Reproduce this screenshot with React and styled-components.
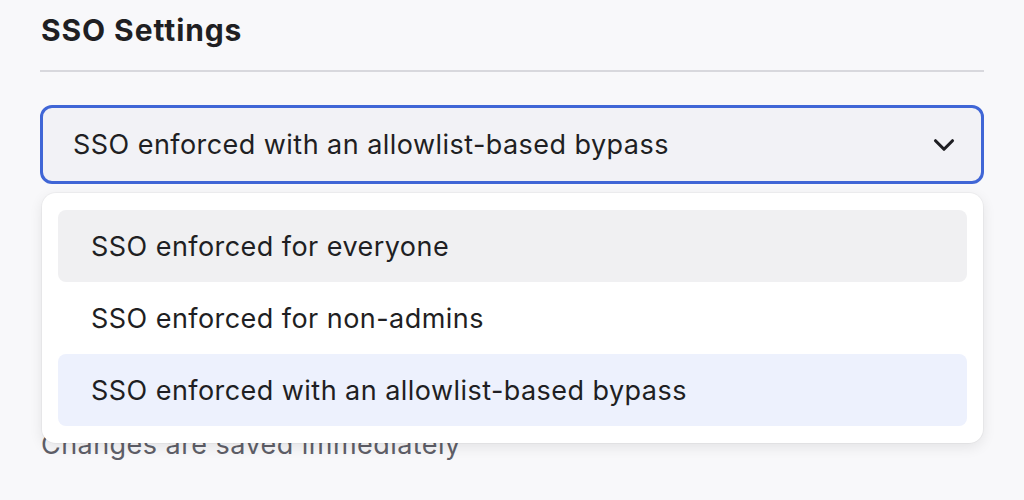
import styled, { createGlobalStyle } from "styled-components";
import { ChevronDown } from "lucide-react";

const GlobalStyle = createGlobalStyle`
  html, body {
    margin: 0;
    padding: 0;
    background: #f8f8fa;
    font-family: Inter, "Noto Sans", sans-serif;
    color: #1f1f23;
  }
`;

const options = [
  "SSO enforced for everyone",
  "SSO enforced for non-admins",
  "SSO enforced with an allowlist-based bypass",
];

const Page = styled.div`
  padding: 11px 40px 0 40px;
  width: 944px;
`;

const Title = styled.h2`
  margin: 0;
  font-size: 30px;
  font-weight: 700;
  line-height: 38px;
  padding-left: 1px;
  letter-spacing: 0.9px;
`;

const Divider = styled.div`
  height: 2px;
  background: #d8d8dd;
  margin: 21px 0 33px 0;
`;

const Field = styled.div`
  position: relative;
`;

const Trigger = styled.div`
  height: 79px;
  box-sizing: border-box;
  border: 3px solid #4066d6;
  border-radius: 12px;
  background: #f2f2f6;
  display: flex;
  align-items: center;
  justify-content: space-between;
  padding: 0 20px 0 30px;
  font-size: 27px;
  letter-spacing: 0.45px;
`;

const Menu = styled.ul`
  position: absolute;
  top: 88px;
  left: 2px;
  right: 1px;
  margin: 0;
  list-style: none;
  background: #fff;
  border-radius: 14px;
  padding: 17px 16px;
  box-shadow: 0 4px 14px rgba(0, 0, 0, 0.09), 0 0 0 1px rgba(0, 0, 0, 0.03);
  z-index: 2;
`;

const Item = styled.li`
  height: 72px;
  display: flex;
  align-items: center;
  padding-left: 33px;
  border-radius: 8px;
  font-size: 27px;
  letter-spacing: 0.45px;
  background: ${(p) => (p.$selected ? "#edf1fd" : p.$hover ? "#f0f0f2" : "transparent")};
`;

const Hint = styled.p`
  margin: 242px 0 0 1px;
  font-size: 27px;
  letter-spacing: 0.45px;
  line-height: 38px;
  color: #5f5f68;
`;

const App = () => {
  return (
    <>
      <GlobalStyle />
      <Page>
        <Title>SSO Settings</Title>
        <Divider />
        <Field>
          <Trigger>
            <span>{options[2]}</span>
            <ChevronDown size={34} strokeWidth={2.2} color="#1f1f23" />
          </Trigger>
          <Menu>
            {options.map((o, i) => (
              <Item key={o} $hover={i === 0} $selected={i === 2}>
                {o}
              </Item>
            ))}
          </Menu>
        </Field>
        <Hint>Changes are saved immediately</Hint>
      </Page>
    </>
  );
};

export default App;
